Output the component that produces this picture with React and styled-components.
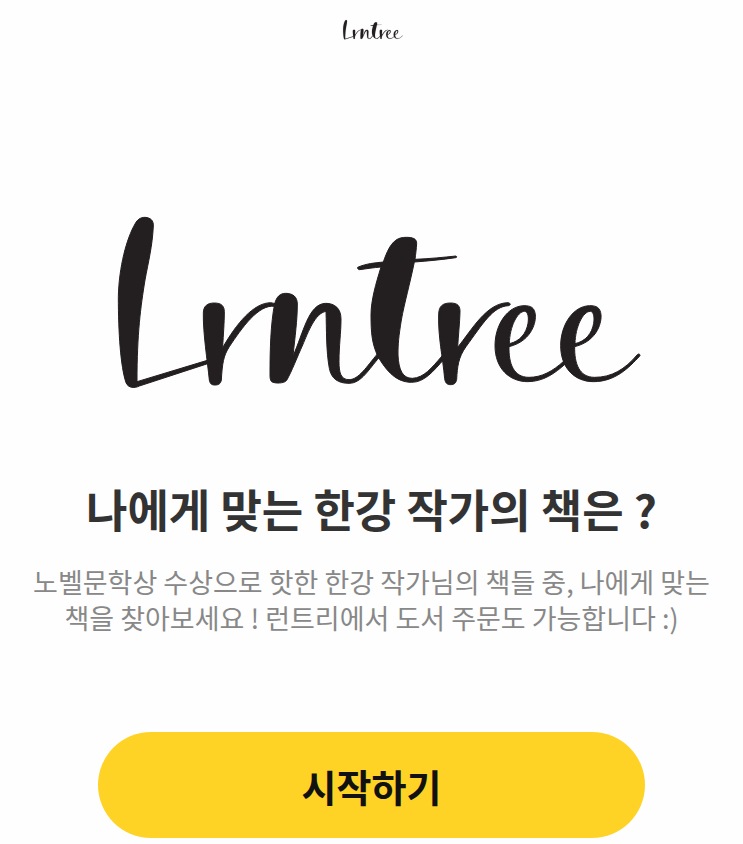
import React from "react";
import styled, { createGlobalStyle } from "styled-components";

const GlobalStyle = createGlobalStyle`
  * {
    box-sizing: border-box;
  }
  body {
    margin: 0;
    background: #fefefe;
    font-family: "Noto Sans CJK KR", "Noto Sans", sans-serif;
  }
`;

const Header = styled.header`
  display: flex;
  justify-content: center;
  align-items: center;
  height: 60px;
`;

const Main = styled.main`
  display: flex;
  flex-direction: column;
  align-items: center;
  padding: 140px 24px 6px;
  text-align: center;
`;

const LogoSvg = styled.svg`
  display: block;
  width: 100%;
  max-width: ${({ $width }) => $width}px;
  height: auto;
  fill: #231f20;
  stroke: #231f20;
  stroke-width: 3;
`;

const Title = styled.h1`
  margin: 77px 0 0;
  font-size: 45px;
  line-height: 54px;
  font-weight: 700;
  color: #333;
`;

const Description = styled.p`
  margin: 28px 0 0;
  font-size: 27px;
  line-height: 36px;
  color: #888;
  word-break: keep-all;
`;

const StartButton = styled.button`
  width: 100%;
  max-width: 547px;
  height: 106px;
  margin-top: 96px;
  padding: 0;
  border: none;
  border-radius: 53px;
  background: #fed326;
  color: #111;
  font-family: inherit;
  font-size: 38px;
  font-weight: 700;
  cursor: pointer;
`;

const Logo = ({ width }) => {
  return (
    <LogoSvg
      $width={width}
      viewBox="0 0 1629 615"
      role="img"
      aria-label="Lrntree"
      fillRule="evenodd"
    >
      <path d="M105 72C112 58 122 52 135 52C152 53 161 62 160 78C157 140 145 185 135 240C122 320 111 400 111 545L322 481L323 491L118 558C105 565 85 565 78 548C62 500 55 400 55 290C57 200 80 115 105 72Z" />
      <path d="M310 340C310 318 322 309 343 309C364 309 373 318 373 335C373 370 370 400 368 443C410 370 460 309 512 308L526 311L524 319C475 312 425 385 388 440C370 468 367 490 364 540C362 552 355 555 345 555C335 555 330 552 328 540C322 480 309 400 310 340Z" />
      <path d="M524 311C530 290 540 280 557 280C578 280 592 290 592 312C592 360 585 410 579 468C610 400 625 311 677 310C704 310 723 325 723 357C723 400 717 435 717 485C717 517 722 539 747 539C776 539 800 500 832 462L838 472C806 508 784 550 747 550C715 550 694 537 688 505C678 450 680 390 678 334C645 340 625 395 608 435C592 470 575 515 560 541C553 551 524 551 515 545C511 541 510 535 510 525C510 450 512 370 524 311Z" />
      <path d="M773 202C800 190 825 189 850 186C872 120 893 112 920 112C938 112 950 116 950 130C949 148 947 162 945 178C990 176 1030 172 1068 168C1071 170 1071 172 1067 173C1025 179 985 183 943 186C930 250 913 310 904 360C896 410 894 430 894 465C896 510 908 535 937 535C972 533 994 505 1026 468L1032 478C1000 513 974 547 935 547C890 547 860 515 833 468C816 430 813 400 813 345C813 300 828 250 843 201C820 203 800 206 779 209C774 209 772 205 773 202Z" />
      <path d="M1016 345C1016 318 1028 309 1052 309C1073 309 1081 318 1080 337C1079 370 1075 405 1073 442C1115 390 1160 308 1225 308C1232 310 1233 315 1226 317C1178 319 1148 372 1098 440C1075 472 1072 500 1070 538C1068 550 1062 554 1052 554C1042 554 1036 550 1034 536C1028 470 1014 410 1016 345Z" />
      <path d="M1227 440C1300 422 1308 360 1306 345C1304 322 1292 317 1272 317C1222 318 1185 375 1185 437C1185 505 1228 545 1283 545C1330 545 1365 520 1398 490L1392 483C1358 514 1325 532 1287 532C1240 532 1226 490 1227 440ZM1228 431C1229 380 1252 334 1274 334C1284 335 1287 352 1284 370C1279 400 1260 424 1228 431Z" />
      <path d="M1424 440C1497 422 1505 360 1503 345C1501 322 1489 317 1469 317C1419 318 1382 375 1382 437C1382 505 1425 545 1480 545C1545 545 1585 505 1620 467C1620 462 1616 460 1612 464C1575 508 1535 532 1484 532C1437 532 1423 490 1424 440ZM1425 431C1426 380 1449 334 1471 334C1481 335 1484 352 1481 370C1476 400 1457 424 1425 431Z" />
    </LogoSvg>
  );
};

const App = () => {
  return (
    <>
      <GlobalStyle />
      <Header>
        <Logo width={62} />
      </Header>
      <Main>
        <Logo width={543} />
        <Title>나에게 맞는 한강 작가의 책은 ?</Title>
        <Description>
          노벨문학상 수상으로 핫한 한강 작가님의 책들 중, 나에게 맞는 책을
          찾아보세요 ! 런트리에서 도서 주문도 가능합니다 :)
        </Description>
        <StartButton type="button">시작하기</StartButton>
      </Main>
    </>
  );
};

export default App;
